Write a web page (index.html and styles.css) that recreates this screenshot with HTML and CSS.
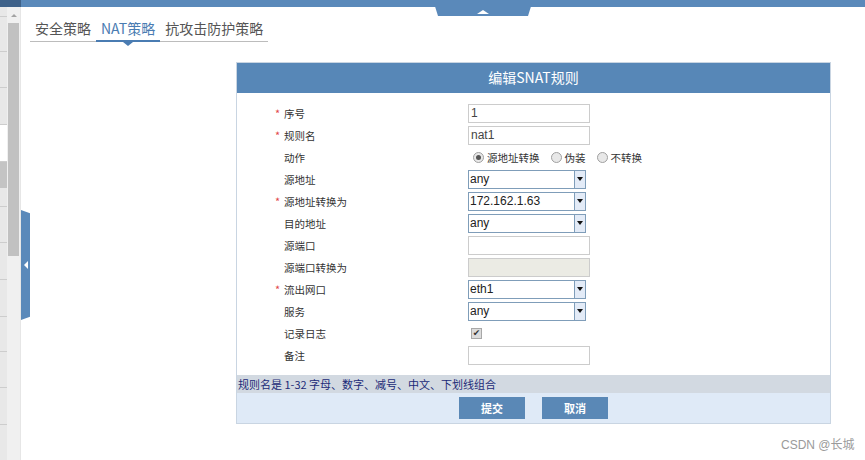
FILE: index.html
```html
<!DOCTYPE html>
<html lang="zh-CN">
<head>
<meta charset="utf-8">
<title>编辑SNAT规则</title>
<link rel="stylesheet" href="styles.css">
</head>
<body>
<div class="topbar">
  <div class="topbar-left"></div>
  <div class="handle"><span class="handle-arrow"></span></div>
</div>
<div class="main">
  <div class="sidebar">
    <div class="strip">
      <div class="srow h10"></div>
      <div class="srow h35"></div>
      <div class="srow h36"></div>
      <div class="srow h37"></div>
      <div class="srow h37 white"></div>
      <div class="srow h26 dark"></div>
      <div class="srow h19"></div>
      <div class="srow h36"></div>
      <div class="srow h37"></div>
      <div class="srow h37"></div>
      <div class="srow h35"></div>
      <div class="srow h36"></div>
      <div class="srow h37"></div>
    </div>
    <div class="scroll">
      <div class="scroll-up"></div>
      <div class="thumb"></div>
    </div>
  </div>
  <div class="content">
    <div class="collapse"><span class="collapse-arrow"></span></div>
    <div class="tabs">
      <div class="tab">安全策略</div>
      <div class="tab active">NAT策略</div>
      <div class="tab">抗攻击防护策略</div>
    </div>
    <div class="panel">
      <div class="panel-head">编辑SNAT规则</div>
      <div class="panel-body">
        <div class="row"><div class="lbl"><span class="star">*</span>序号</div><div class="input">1</div></div>
        <div class="row"><div class="lbl"><span class="star">*</span>规则名</div><div class="input">nat1</div></div>
        <div class="row"><div class="lbl"><span class="star"></span>动作</div>
          <div class="radios">
            <span class="radio on"></span><span class="rtext">源地址转换</span>
            <span class="radio"></span><span class="rtext">伪装</span>
            <span class="radio"></span><span class="rtext">不转换</span>
          </div>
        </div>
        <div class="row"><div class="lbl"><span class="star"></span>源地址</div><div class="select"><span class="sval">any</span><span class="sbtn"></span></div></div>
        <div class="row"><div class="lbl"><span class="star">*</span>源地址转换为</div><div class="select"><span class="sval">172.162.1.63</span><span class="sbtn"></span></div></div>
        <div class="row"><div class="lbl"><span class="star"></span>目的地址</div><div class="select"><span class="sval">any</span><span class="sbtn"></span></div></div>
        <div class="row"><div class="lbl"><span class="star"></span>源端口</div><div class="input"></div></div>
        <div class="row"><div class="lbl"><span class="star"></span>源端口转换为</div><div class="input disabled"></div></div>
        <div class="row"><div class="lbl"><span class="star">*</span>流出网口</div><div class="select"><span class="sval">eth1</span><span class="sbtn"></span></div></div>
        <div class="row"><div class="lbl"><span class="star"></span>服务</div><div class="select"><span class="sval">any</span><span class="sbtn"></span></div></div>
        <div class="row"><div class="lbl"><span class="star"></span>记录日志</div><div class="check">✔</div></div>
        <div class="row"><div class="lbl"><span class="star"></span>备注</div><div class="input"></div></div>
      </div>
      <div class="hint">规则名是 1-32 字母、数字、减号、中文、下划线组合</div>
      <div class="actions">
        <div class="btn">提交</div>
        <div class="btn">取消</div>
      </div>
    </div>
    <div class="watermark">CSDN @长城</div>
  </div>
</div>
</body>
</html>
```
FILE: styles.css
```css
* { box-sizing: border-box; }
html, body { margin: 0; padding: 0; }
body {
  width: 865px;
  height: 460px;
  overflow: hidden;
  background: #ffffff;
  font-family: "Noto Sans CJK SC", "Noto Sans", sans-serif;
  color: #333;
}
.topbar {
  height: 7px;
  background: #5a89ba;
  display: flex;
  position: relative;
}
.topbar-left { width: 21px; background: #3e6189; }
.handle {
  position: absolute;
  left: 433px;
  top: 0;
  width: 100px;
  height: 16px;
  background: #5a89ba;
  clip-path: polygon(0 0, 100% 0, 95% 100%, 5% 100%);
  display: flex;
  justify-content: center;
  align-items: flex-start;
  padding-top: 10px;
}
.handle-arrow {
  width: 0; height: 0;
  border-left: 6px solid transparent;
  border-right: 6px solid transparent;
  border-bottom: 4px solid #ffffff;
}
.main { display: flex; height: 453px; }
.sidebar { width: 21px; display: flex; flex: none; }
.strip {
  width: 7px;
  background: #e8e8e8;
  display: flex;
  flex-direction: column;
}
.srow { border-bottom: 1px solid #cdcdcd; flex: none; }
.srow.white { background: #ffffff; }
.srow.dark { background: #c4c4c4; border-bottom: none; }
.h10 { height: 10px; } .h19 { height: 19px; } .h26 { height: 26px; }
.h35 { height: 35px; } .h36 { height: 36px; } .h37 { height: 37px; }
.scroll {
  width: 14px;
  background: #f0f0f0;
  display: flex;
  flex-direction: column;
  align-items: center;
  padding-top: 7px;
  border-right: 1px solid #e6e6e6;
}
.scroll-up {
  width: 0; height: 0;
  border-left: 3px solid transparent;
  border-right: 3px solid transparent;
  border-bottom: 3px solid #a3a3a3;
}
.thumb {
  margin-top: 6px;
  width: 11px;
  height: 233px;
  background: #c1c1c1;
}
.content { flex: 1; position: relative; padding-top: 11px; }
.collapse {
  position: absolute;
  left: 0;
  top: 203px;
  width: 9px;
  height: 110px;
  background: #5a89ba;
  clip-path: polygon(0 0, 100% 3%, 100% 97%, 0 100%);
  display: flex;
  align-items: center;
  justify-content: center;
}
.collapse-arrow {
  width: 0; height: 0;
  border-top: 4px solid transparent;
  border-bottom: 4px solid transparent;
  border-right: 4px solid #ffffff;
}
.tabs {
  display: flex;
  width: fit-content;
  margin-left: 9px;
  border-bottom: 1px solid #bcbcbc;
}
.tab {
  position: relative;
  font-size: 14px;
  line-height: 20px;
  padding: 0 5px 2px;
  color: #555;
  border-bottom: 2px solid transparent;
  margin-bottom: -1px;
}
.tab.active { color: #4a7cb2; border-bottom-color: #4a7cb2; }
.tab.active::after {
  content: "";
  position: absolute;
  left: 50%;
  bottom: -6px;
  margin-left: -5px;
  border-left: 5px solid transparent;
  border-right: 5px solid transparent;
  border-top: 4px solid #4a7cb2;
}
.panel {
  margin-top: 20px;
  margin-left: 215px;
  width: 595px;
  border: 1px solid #c9d5e2;
}
.panel-head {
  height: 30px;
  line-height: 29px;
  background: #5787b7;
  color: #ffffff;
  text-align: center;
  font-size: 14px;
}
.panel-body { padding: 9px 0; }
.row { display: flex; align-items: center; height: 22px; }
.lbl {
  width: 231px;
  padding-left: 38px;
  font-size: 10.5px;
  color: #333;
  display: flex;
  align-items: center;
}
.star {
  display: inline-block;
  width: 9px;
  color: #e2474b;
  font-size: 11px;
  line-height: 10px;
}
.input {
  width: 122px;
  height: 19px;
  border: 1px solid #cccccc;
  font-family: "Liberation Sans", sans-serif;
  font-size: 12px;
  line-height: 17px;
  padding: 0 2px;
  color: #444;
  background: #fff;
}
.input.disabled { background: #ebebe4; }
.select {
  width: 118px;
  height: 19px;
  border: 1px solid #7f9db9;
  display: flex;
  background: #fff;
}
.sval {
  flex: 1;
  font-family: "Liberation Sans", sans-serif;
  font-size: 12px;
  line-height: 17px;
  padding-left: 1px;
  color: #222;
}
.sbtn {
  width: 11px;
  border-left: 1px solid #7f9db9;
  background: #e3ebf7;
  display: flex;
  align-items: center;
  justify-content: center;
}
.sbtn::before {
  content: "";
  width: 0; height: 0;
  border-left: 3px solid transparent;
  border-right: 3px solid transparent;
  border-top: 4px solid #111;
}
.radios { display: flex; align-items: center; padding-left: 5px; font-size: 10.5px; color: #333; }
.radio {
  width: 11px;
  height: 11px;
  border-radius: 50%;
  border: 1px solid #a0a0a0;
  background: #e8e8e8;
  display: inline-flex;
  align-items: center;
  justify-content: center;
}
.radio.on::before {
  content: "";
  width: 5px; height: 5px;
  border-radius: 50%;
  background: #555;
}
.rtext { margin-left: 3px; margin-right: 11px; }
.check {
  margin-left: 3px;
  width: 11px;
  height: 11px;
  border: 1px solid #a8a8a8;
  background: #dcdcdc;
  font-size: 9px;
  line-height: 9px;
  text-align: center;
  color: #333;
  font-family: "DejaVu Sans", sans-serif;
}
.hint {
  height: 18px;
  line-height: 18px;
  background: #d2d9e1;
  color: #1c2b78;
  font-size: 11px;
  padding-left: 1px;
}
.actions {
  height: 30px;
  background: #dfeaf7;
  display: flex;
  justify-content: center;
  align-items: center;
  gap: 17px;
}
.btn {
  width: 66px;
  height: 22px;
  background: #5a88b6;
  color: #ffffff;
  font-size: 11px;
  font-weight: bold;
  line-height: 22px;
  text-align: center;
}
.watermark {
  position: absolute;
  left: 760px;
  top: 428px;
  font-family: "Liberation Sans", "Noto Sans CJK SC", sans-serif;
  font-size: 12px;
  color: #9a9a9a;
}
```
